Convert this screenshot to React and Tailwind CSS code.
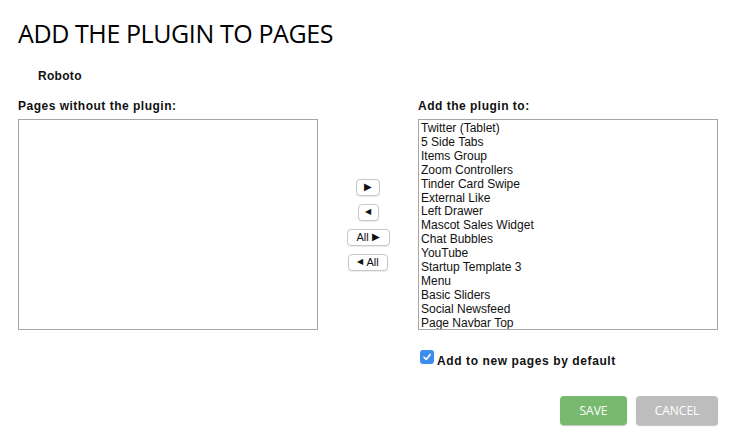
import React from 'react';

const pages = [
  'Twitter (Tablet)',
  '5 Side Tabs',
  'Items Group',
  'Zoom Controllers',
  'Tinder Card Swipe',
  'External Like',
  'Left Drawer',
  'Mascot Sales Widget',
  'Chat Bubbles',
  'YouTube',
  'Startup Template 3',
  'Menu',
  'Basic Sliders',
  'Social Newsfeed',
  'Page Navbar Top',
];

const MoveButton = ({ children, className }) => (
  <button
    className={`h-[17px] flex items-center justify-center gap-[3px] bg-white border border-[#c8c8c8] rounded-[4px] shadow-[0_1px_1px_rgba(0,0,0,0.08)] text-[11px] leading-none text-[#111] ${className}`}
  >
    {children}
  </button>
);

const Right = () => <span className="text-[10px] leading-none">▶</span>;
const Left = () => <span className="text-[8px] leading-none">◀</span>;

export default function App() {
  return (
    <div className="w-[736px] h-[443px] bg-white px-[18px] pt-[18px] text-[#111] font-['Liberation_Sans',Arial,sans-serif]">
      <h1 className="text-[25px] leading-[30px] font-['Open_Sans',sans-serif] tracking-[-0.4px] text-black">
        ADD THE PLUGIN TO PAGES
      </h1>

      <div className="pl-[20px] mt-[21px] text-[12px] leading-[14px] font-bold tracking-[0.3px]">Roboto</div>

      <div className="flex mt-[16px]">
        <div className="w-[300px]">
          <div className="text-[12px] leading-[14px] font-bold tracking-[0.5px] mb-[6px]">Pages without the plugin:</div>
          <div className="h-[211px] border border-[#a6a6a6] bg-white"></div>
        </div>

        <div className="w-[100px] pt-[20px] flex flex-col items-center justify-center gap-[8px]">
          <MoveButton className="w-[24px]"><Right /></MoveButton>
          <MoveButton className="w-[21px]"><Left /></MoveButton>
          <MoveButton className="w-[43px]">All <Right /></MoveButton>
          <MoveButton className="w-[40px]"><Left /> All</MoveButton>
        </div>

        <div className="w-[300px]">
          <div className="text-[12px] leading-[14px] font-bold tracking-[0.5px] mb-[6px]">Add the plugin to:</div>
          <div className="h-[211px] border border-[#a6a6a6] bg-white overflow-hidden pt-[2px] pl-[2px]">
            {pages.map((p) => (
              <div key={p} className="text-[12px] leading-[13.9px] text-[#111]">{p}</div>
            ))}
          </div>
        </div>
      </div>

      <div className="flex items-start ml-[402px] mt-[20px] gap-[3px]">
        <span className="w-[14px] h-[14px] rounded-[3px] bg-[#3b8ef0] flex items-center justify-center">
          <svg width="10" height="10" viewBox="0 0 10 10">
            <path d="M2 5.2 L4.2 7.4 L8.2 2.4" fill="none" stroke="white" strokeWidth="1.6" strokeLinecap="round" strokeLinejoin="round" />
          </svg>
        </span>
        <span className="text-[12px] leading-[14px] font-bold tracking-[0.6px] mt-[4px]">Add to new pages by default</span>
      </div>

      <div className="flex justify-end gap-[9px] mt-[28px]">
        <button className="w-[67px] h-[29px] rounded-[4px] bg-[#77ba6f] shadow-[0_1px_1px_rgba(0,0,0,0.25)] text-white text-[12px] font-medium font-['Open_Sans',sans-serif]">
          SAVE
        </button>
        <button className="w-[82px] h-[29px] rounded-[4px] bg-[#bdbdbd] shadow-[0_1px_1px_rgba(0,0,0,0.25)] text-white text-[12px] font-medium font-['Open_Sans',sans-serif]">
          CANCEL
        </button>
      </div>
    </div>
  );
}
